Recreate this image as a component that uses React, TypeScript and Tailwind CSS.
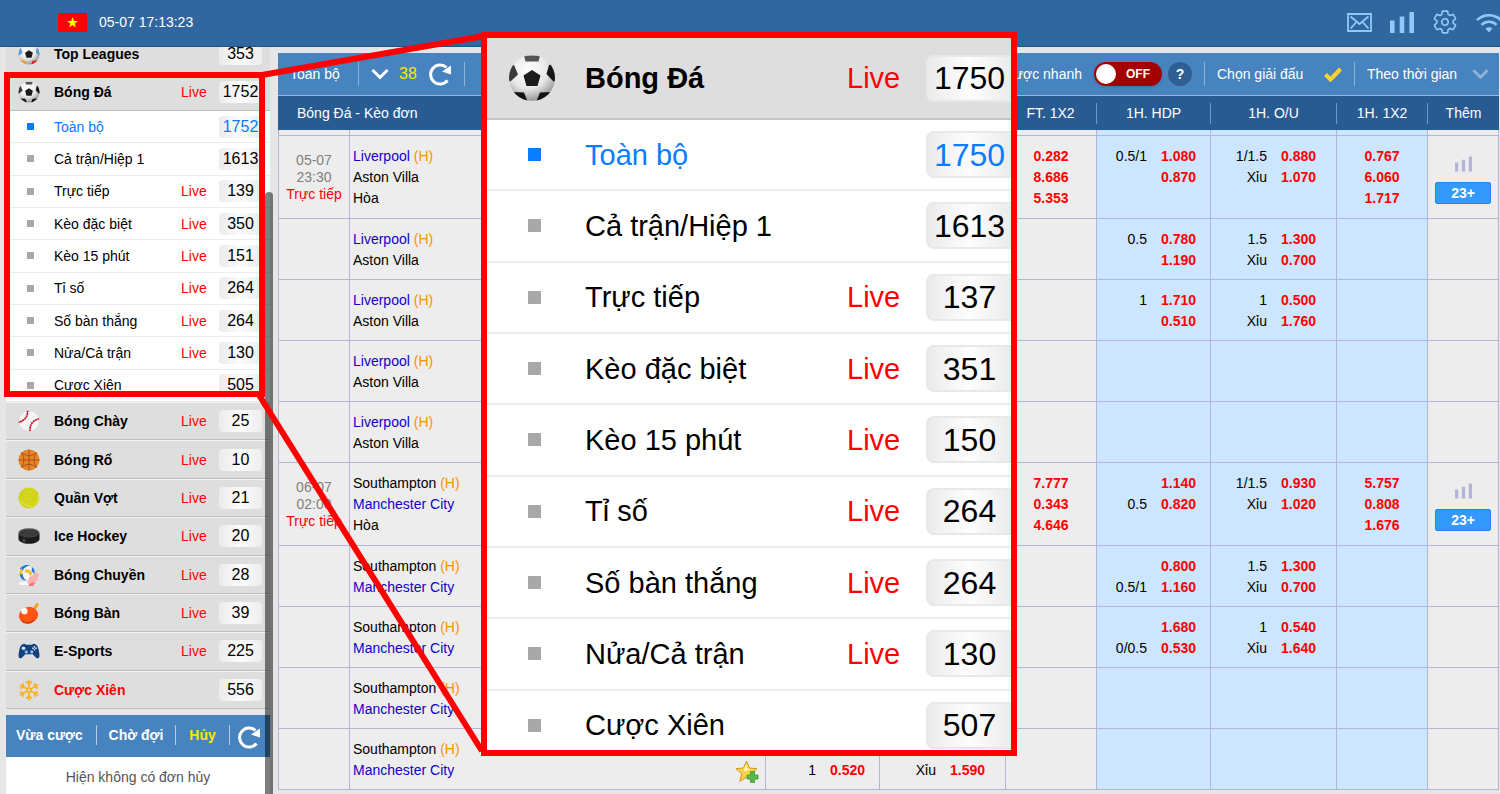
import { useState, type ReactNode } from 'react';
import { IoSettingsOutline } from 'react-icons/io5';

type Sport = {
  name: string;
  count: number;
  live: boolean;
  icon: ReactNode;
  highlight?: boolean;
};

type Market = { name: string; live: boolean; count: number; zoomCount: number };

type Line = [handicap: string, odds: string];

type OddsRow = {
  id: number;
  kickoff?: [date: string, time: string];
  home: string;
  away: string;
  favourite: 'home' | 'away';
  draw?: boolean;
  ftHdp?: Line[];
  ftOu?: Line[];
  ft1x2?: string[];
  hdp?: Line[];
  ou?: Line[];
  h1x2?: string[];
};

const MARKETS: Market[] = [
  { name: 'Toàn bộ', live: false, count: 1752, zoomCount: 1750 },
  { name: 'Cả trận/Hiệp 1', live: false, count: 1613, zoomCount: 1613 },
  { name: 'Trực tiếp', live: true, count: 139, zoomCount: 137 },
  { name: 'Kèo đặc biệt', live: true, count: 350, zoomCount: 351 },
  { name: 'Kèo 15 phút', live: true, count: 151, zoomCount: 150 },
  { name: 'Tỉ số', live: true, count: 264, zoomCount: 264 },
  { name: 'Số bàn thắng', live: true, count: 264, zoomCount: 264 },
  { name: 'Nửa/Cả trận', live: true, count: 130, zoomCount: 130 },
  { name: 'Cược Xiên', live: false, count: 505, zoomCount: 507 },
];

const LIV = { home: 'Liverpool', away: 'Aston Villa', favourite: 'home' as const };
const SOU = { home: 'Southampton', away: 'Manchester City', favourite: 'away' as const };

const ROWS: OddsRow[] = [
  {
    id: 1,
    ...LIV,
    kickoff: ['05-07', '23:30'],
    draw: true,
    ft1x2: ['0.282', '8.686', '5.353'],
    hdp: [['0.5/1', '1.080'], ['', '0.870']],
    ou: [['1/1.5', '0.880'], ['Xỉu', '1.070']],
    h1x2: ['0.767', '6.060', '1.717'],
  },
  { id: 2, ...LIV, hdp: [['0.5', '0.780'], ['', '1.190']], ou: [['1.5', '1.300'], ['Xỉu', '0.700']] },
  { id: 3, ...LIV, hdp: [['1', '1.710'], ['', '0.510']], ou: [['1', '0.500'], ['Xỉu', '1.760']] },
  { id: 4, ...LIV },
  { id: 5, ...LIV },
  {
    id: 6,
    ...SOU,
    kickoff: ['06-07', '02:00'],
    draw: true,
    ft1x2: ['7.777', '0.343', '4.646'],
    hdp: [['', '1.140'], ['0.5', '0.820']],
    ou: [['1/1.5', '0.930'], ['Xỉu', '1.020']],
    h1x2: ['5.757', '0.808', '1.676'],
  },
  { id: 7, ...SOU, hdp: [['', '0.800'], ['0.5/1', '1.160']], ou: [['1.5', '1.300'], ['Xỉu', '0.700']] },
  { id: 8, ...SOU, hdp: [['', '1.680'], ['0/0.5', '0.530']], ou: [['1', '0.540'], ['Xỉu', '1.640']] },
  { id: 9, ...SOU },
  { id: 10, ...SOU, ftHdp: [['', ''], ['1', '0.520']], ftOu: [['', ''], ['Xỉu', '1.590']] },
];

function SoccerBall({ id, className, world }: { id: string; className: string; world?: boolean }) {
  return (
    <svg viewBox="0 0 48 48" className={className} aria-hidden="true">
      <defs>
        <radialGradient id={id} cx="42%" cy="32%" r="68%">
          <stop offset="0" stopColor="#fff" />
          <stop offset="0.6" stopColor="#e8e8e8" />
          <stop offset="1" stopColor="#9a9a9a" />
        </radialGradient>
        <clipPath id={`${id}-clip`}>
          <circle cx="24" cy="24" r="23" />
        </clipPath>
      </defs>
      <circle cx="24" cy="24" r="23" fill={`url(#${id})`} />
      <g clipPath={`url(#${id}-clip)`}>
        <path d="M24 16l8.500 5.500-3 10.500h-11l-3-10.500z" fill="#1c1c1c" />
        <path d="M16 1.500h16l-1.500 6H17.500z" fill={world ? '#e9eef5' : '#555'} />
        <path d="M0 12l6-1 4 9.500L3 27l-4 1z" fill={world ? '#5b9bd5' : '#3a3a3a'} />
        <path d="M48 10l-7 1-2.500 9L45 27l5 1z" fill={world ? '#5b9bd5' : '#161616'} />
        <path d="M4 38l12 .5 4 10H8z" fill={world ? '#f59a23' : '#111'} />
        <path d="M44 38l-12 .5-4 10H40z" fill={world ? '#e02020' : '#111'} />
      </g>
    </svg>
  );
}

function BaseballIcon() {
  return (
    <svg viewBox="0 0 24 24" className="size-[22px]" aria-hidden="true">
      <circle cx="12" cy="12" r="11.500" fill="#f4f4f4" stroke="#ccc" strokeWidth="0.600" />
      <path d="M10.500 1Q11 10 1 13.500M22.500 9.500Q12.500 12.500 13 23" fill="none" stroke="#c8202c" strokeWidth="1.300" />
      <path d="M10.500 1Q11 10 1 13.500M22.500 9.500Q12.500 12.500 13 23" fill="none" stroke="#c8202c" strokeWidth="2.400" strokeDasharray="0.800 2" />
    </svg>
  );
}

function BasketballIcon() {
  return (
    <svg viewBox="0 0 24 24" className="size-[22px]" aria-hidden="true">
      <circle cx="12" cy="12" r="11.500" fill="#e8832a" />
      <path
        d="M12 .5v23M.5 12h23M4 4q4.500 3.500 8 3.500T20 4M4 20q4.500-3.500 8-3.500t8 3.500M4 4q5 8 0 16M20 4q-5 8 0 16"
        fill="none"
        stroke="#9c4a12"
        strokeWidth="0.900"
      />
    </svg>
  );
}

function TennisIcon() {
  return (
    <svg viewBox="0 0 24 24" className="size-[22px]" aria-hidden="true">
      <circle cx="12" cy="12" r="11.500" fill="#d3d318" />
      <path d="M1.500 15Q11 21.500 16 22.500M22.500 8q1.500 9-6 14.500" fill="none" stroke="#e6e67a" strokeWidth="1" />
      <path d="M8 6h9M7 9h11M8 12h9" stroke="#e4e35c" strokeWidth="1" strokeDasharray="1 2" />
    </svg>
  );
}

function PuckIcon() {
  return (
    <svg viewBox="0 0 24 24" className="size-[22px]" aria-hidden="true">
      <path d="M.5 9v6c0 3 5 5.500 11.500 5.500S23.500 18 23.500 15V9z" fill="#1b1b1b" />
      <ellipse cx="12" cy="8.500" rx="11.500" ry="5" fill="#555" />
      <ellipse cx="12" cy="9" rx="10.500" ry="4" fill="#3b3b3b" />
      <path d="M5 15h3v4H5z" fill="#444" />
    </svg>
  );
}

function VolleyballIcon() {
  return (
    <svg viewBox="0 0 24 24" className="size-[22px]" aria-hidden="true">
      <circle cx="9" cy="9.500" r="8.500" fill="#f5f5f5" />
      <path d="M2 5q5-6 12-3-7 0-9 6zM1 10q2 8 8 8-4-3-4-8z" fill="#1f78d1" />
      <path d="M8 6q6-1 8 5l-3 2q0-4-6-4zM2 6l3-1q-1 4 0 6L1 12z" fill="#f2c230" />
      <path d="M15 3q4 3 3 8l-3-3z" fill="#1f78d1" />
      <path d="M10 22l2-7 2-3 1 2 2-4 1.500.5 1.500-2 1 2 2 .5-2 7-5 5z" fill="#f6b3ae" />
      <path d="M1 20l8-1 3 4H2z" fill="#fafafa" />
      <path d="M12 22l4-2 3 1-3 3h-4z" fill="#ff6f7d" />
    </svg>
  );
}

function PingPongIcon() {
  return (
    <svg viewBox="0 0 24 24" className="size-[22px]" aria-hidden="true">
      <path d="M16 7l4-6 3 1-2 4-4 4z" fill="#f4a020" />
      <ellipse cx="11.500" cy="14.500" rx="10.500" ry="9" fill="#ff5412" transform="rotate(-18 11.500 14.500)" />
      <path d="M3 20q7 5 15-1-2 4.500-8 4.500-5 0-7-3.500z" fill="#cc3305" />
      <circle cx="7" cy="10" r="3.400" fill="#fff" />
    </svg>
  );
}

function GamepadIcon() {
  return (
    <svg viewBox="0 0 24 24" className="size-[22px]" aria-hidden="true">
      <path
        d="M5 4.500q2-1 4 .8h6q2-1.800 4-.8 2.500 1 3.500 6 1.500 7 .5 8.500-1.500 2-3.500 0L16 15.500H8L4.500 19Q2.500 21 1 19q-1-1.500.5-8.500 1-5 3.500-6z"
        fill="#14407c"
      />
      <circle cx="6" cy="9" r="2" fill="#cfe4ff" />
      <circle cx="9" cy="13" r="1.700" fill="#8fc0ff" />
      <circle cx="15" cy="13" r="1.700" fill="#8fc0ff" />
      <path d="M18 6.500v5M15.500 9h5" stroke="#e6f1ff" strokeWidth="1.400" strokeDasharray="1.700 1.600" />
    </svg>
  );
}

function SnowflakeIcon() {
  return (
    <svg viewBox="0 0 24 24" className="size-[22px]" fill="none" stroke="#fbb01c" strokeWidth="1.800" aria-hidden="true">
      {[0, 60, 120, 180, 240, 300].map((deg) => (
        <path key={deg} d="M12 9.500V.5M8.800 2.500l3.200 3 3.200-3M12 9.500l-2.200 1.200" transform={`rotate(${deg} 12 12)`} />
      ))}
    </svg>
  );
}

function BarsIcon({ className }: { className: string }) {
  return (
    <svg viewBox="0 0 24 21" className={className} fill="currentColor" aria-hidden="true">
      <path d="M0 8.500h4.600V21H0zM9.700 4.500h4.600V21H9.700zM19.400 0H24v21h-4.600z" />
    </svg>
  );
}

function MailIcon() {
  return (
    <svg viewBox="0 0 25 19" className="h-[19px] w-[25px]" fill="none" stroke="currentColor" strokeWidth="1.800" aria-hidden="true">
      <path d="M1 1h23v17H1zM3.500 3.500L12.500 11l9-7.500M3.500 15.500l6-6.500M21.500 15.500l-6-6.500" />
    </svg>
  );
}

function WifiIcon() {
  return (
    <svg viewBox="0 0 26 21" className="h-[21px] w-[26px] shrink-0" fill="none" stroke="currentColor" strokeWidth="2.600" aria-hidden="true">
      <path d="M1 8.200a17 17 0 0 1 24 0M5.500 12.900a10.600 10.600 0 0 1 15 0" />
      <path d="M9.500 16.600a5 5 0 0 1 7 0L13 20.500z" fill="currentColor" stroke="none" />
    </svg>
  );
}

function RefreshIcon() {
  return (
    <svg viewBox="0 0 24 24" className="size-6" aria-hidden="true">
      <path d="M19.500 18.500A9.500 9.500 0 1 1 18.500 5.500" fill="none" stroke="#fff" strokeWidth="3" />
      <path d="M23 3.500v9l-9-3z" fill="#fff" />
    </svg>
  );
}

function ChevronIcon({ className }: { className: string }) {
  return (
    <svg viewBox="0 0 18 12" className={className} fill="none" stroke="currentColor" strokeWidth="3" aria-hidden="true">
      <path d="M1.500 2L9 9.500 16.500 2" />
    </svg>
  );
}

function StarAddIcon() {
  return (
    <svg viewBox="0 0 24 24" className="size-6" aria-hidden="true">
      <path d="M11.500 1l3 7 7.500.7-5.700 5 1.800 7.600-6.600-4-6.700 4 1.900-7.600L1 8.700 8.500 8z" fill="#f9d24a" stroke="#c99b22" strokeWidth="1" />
      <path d="M11 4l1.500 5 4 .5-8 2z" fill="#fff3b8" />
      <path d="M15.500 11.500h4v3.500H23v4h-3.500v3.500h-4V19H12v-4h3.500z" fill="#57b94c" stroke="#3d9a38" strokeWidth="0.800" />
    </svg>
  );
}

const SPORTS: Sport[] = [
  { name: 'Bóng Chày', live: true, count: 25, icon: <BaseballIcon /> },
  { name: 'Bóng Rổ', live: true, count: 10, icon: <BasketballIcon /> },
  { name: 'Quần Vợt', live: true, count: 21, icon: <TennisIcon /> },
  { name: 'Ice Hockey', live: true, count: 20, icon: <PuckIcon /> },
  { name: 'Bóng Chuyền', live: true, count: 28, icon: <VolleyballIcon /> },
  { name: 'Bóng Bàn', live: true, count: 39, icon: <PingPongIcon /> },
  { name: 'E-Sports', live: true, count: 225, icon: <GamepadIcon /> },
  { name: 'Cược Xiên', live: false, count: 556, icon: <SnowflakeIcon />, highlight: true },
];

function Count({ value }: { value: number }) {
  return (
    <span className="flex h-[22px] w-[43px] items-center justify-center rounded bg-linear-to-r from-[#ebebeb] via-[#fbfbfb] to-[#ededed] text-base leading-5">
      {value}
    </span>
  );
}

function SportRow({ sport }: { sport: Sport }) {
  return (
    <button
      type="button"
      className="grid h-full w-full grid-cols-[48px_1fr_38px_51px] items-center border-t border-b border-t-[#f2f2f2] border-b-[#bdbdbd] bg-[#dedede] text-left"
    >
      <span className="pl-3">{sport.icon}</span>
      <span className={`font-bold ${sport.highlight ? 'text-[#ff0000]' : ''}`}>{sport.name}</span>
      <span className="text-[#ff0000]">{sport.live ? 'Live' : ''}</span>
      <Count value={sport.count} />
    </button>
  );
}

function MarketRow({ market, active, onSelect }: { market: Market; active: boolean; onSelect: () => void }) {
  return (
    <button
      type="button"
      onClick={onSelect}
      className={`grid w-full grid-cols-[48px_1fr_38px_51px] items-center border-b border-[#ececec] bg-white text-left ${
        active ? 'text-[#0a7cff]' : ''
      }`}
    >
      <span className={`ml-[21px] size-[7px] ${active ? 'bg-[#0a7cff]' : 'bg-[#a8a8a8]'}`} />
      <span>{market.name}</span>
      <span className="text-[#ff0000]">{market.live ? 'Live' : ''}</span>
      <Count value={market.count} />
    </button>
  );
}

function Sidebar() {
  const [active, setActive] = useState('Toàn bộ');
  return (
    <aside className="relative flex w-[273px] shrink-0 flex-col overflow-hidden pr-[3px] pl-1.5">
      <nav className="-mt-3 shrink-0">
        <div className="h-[38px]">
          <SportRow
            sport={{ name: 'Top Leagues', live: false, count: 353, icon: <SoccerBall id="ball-top" className="size-[22px]" world /> }}
          />
        </div>
        <div className="h-[38px]">
          <SportRow sport={{ name: 'Bóng Đá', live: true, count: 1752, icon: <SoccerBall id="ball-side" className="size-[22px]" /> }} />
        </div>
        <div className="grid h-[291px] auto-rows-fr">
          {MARKETS.map((m) => (
            <MarketRow key={m.name} market={m} active={m.name === active} onSelect={() => setActive(m.name)} />
          ))}
        </div>
        <div className="grid h-[307px] auto-rows-fr">
          {SPORTS.map((s) => (
            <SportRow key={s.name} sport={s} />
          ))}
        </div>
      </nav>
      <div className="mt-1.5 flex h-[42px] shrink-0 items-center bg-[#4783bf] pb-0.5 pl-2.5 font-bold text-white">
        <button type="button" className="w-20 text-left">Vừa cược</button>
        <span className="h-5 w-px bg-[#b5cde4]" />
        <button type="button" className="w-[78px]">Chờ đợi</button>
        <span className="h-5 w-px bg-[#b5cde4]" />
        <button type="button" className="w-[53px] text-[#ffe600]">Hủy</button>
        <span className="h-5 w-px bg-[#b5cde4]" />
        <button type="button" aria-label="Làm mới đơn cược" className="ml-[7px] pt-1">
          <RefreshIcon />
        </button>
      </div>
      <p className="flex-1 bg-white pt-2.5 text-center leading-5 text-[#555]">Hiện không có đơn hủy</p>
      {/* scroll thumb lies over the list */}
      <div className="absolute right-0 -bottom-2 h-[610px] w-2 rounded-full bg-black/50" />
    </aside>
  );
}

function Toolbar() {
  const [quickBet, setQuickBet] = useState(false);
  return (
    <div className="flex h-[43px] items-center border-b border-[#9db4dc] bg-[#4783bf] pr-2.5 pl-3 text-white">
      <button type="button" className="w-[68px] text-left">Toàn bộ</button>
      <span className="h-6 w-px bg-[#8db4da]" />
      <ChevronIcon className="ml-3 h-3 w-[18px]" />
      <span className="ml-2.5 text-base text-[#ffe600]">38</span>
      <button type="button" aria-label="Làm mới" className="mr-3 ml-[11px]">
        <RefreshIcon />
      </button>
      <span className="h-6 w-px bg-[#8db4da]" />
      <label htmlFor="quick-bet" className="mr-3 ml-auto">Cược nhanh</label>
      <span className="flex h-6 w-[68px] items-center gap-[10px] rounded-full bg-[#a50000] px-0.5 text-xs font-bold shadow">
        <input
          id="quick-bet"
          type="checkbox"
          checked={quickBet}
          onChange={(e) => setQuickBet(e.target.checked)}
          className={`size-5 appearance-none rounded-full bg-white ${quickBet ? 'order-2' : ''}`}
        />
        {quickBet ? 'ON' : 'OFF'}
      </span>
      <button type="button" className="mr-3 ml-1.5 size-6 rounded-full bg-[#2f5f92] text-sm font-bold">?</button>
      <span className="h-6 w-px bg-[#8db4da]" />
      <button type="button" className="mx-3 flex items-center">
        <span className="w-[107px] text-left">Chọn giải đấu</span>
        <svg viewBox="0 0 18 15" className="h-[15px] w-[18px]" fill="none" stroke="#ffd32a" strokeWidth="4" aria-hidden="true">
          <path d="M1.500 7.500l5 5L16.500 2" />
        </svg>
      </button>
      <span className="mr-3 h-6 w-px bg-[#8db4da]" />
      <select aria-label="Sắp xếp" className="w-[105px] appearance-none bg-transparent outline-none">
        <option>Theo thời gian</option>
      </select>
      <ChevronIcon className="h-3 w-[17px] text-[#8db4da]" />
    </div>
  );
}

function LinesCell({ lines = [], className }: { lines?: Line[]; className: string }) {
  return (
    <td className={`border-b border-l border-[#b4b4d6] pt-2.5 align-top ${className}`}>
      {lines.map(([handicap, odds], i) => (
        <div key={i} className="flex min-h-[21px] justify-end">
          <span>{handicap}</span>
          <span className="w-[49px] text-right font-bold text-[#ff0000]">{odds}</span>
        </div>
      ))}
    </td>
  );
}

function OddsCell({ odds = [], className }: { odds?: string[]; className?: string }) {
  return (
    <td className={`border-b border-l border-[#b4b4d6] pt-2.5 text-center align-top font-bold text-[#ff0000] ${className ?? ''}`}>
      {odds.map((o) => (
        <div key={o}>{o}</div>
      ))}
    </td>
  );
}

function MatchRow({ row }: { row: OddsRow }) {
  return (
    <tr className={row.draw ? 'h-[83px]' : 'h-[61px]'}>
      <td className="border-b border-l border-[#b4b4d6] text-center leading-[17px] text-[#808080]">
        {row.kickoff && (
          <>
            {row.kickoff[0]}
            <br />
            {row.kickoff[1]}
            <br />
            <span className="text-[#ff0000]">Trực tiếp</span>
          </>
        )}
      </td>
      <td className="border-b border-l border-[#b4b4d6] pt-2.5 pl-[3px] align-top">
        <div className="flex justify-between pr-1.5">
          <div>
            <div className={row.favourite === 'home' ? 'text-[#1400c8]' : ''}>
              {row.home} <span className="text-[#ff9000]">(H)</span>
            </div>
            <div className={row.favourite === 'away' ? 'text-[#1400c8]' : ''}>{row.away}</div>
            {row.draw && <div>Hòa</div>}
          </div>
          <button type="button" aria-label="Thêm yêu thích" className="mt-[21px] size-6">
            <StarAddIcon />
          </button>
        </div>
      </td>
      <LinesCell lines={row.ftHdp} className="pr-[14px]" />
      <LinesCell lines={row.ftOu} className="pr-5" />
      <OddsCell odds={row.ft1x2} />
      <LinesCell lines={row.hdp} className="bg-[#cce6ff] pr-[14px]" />
      <LinesCell lines={row.ou} className="bg-[#cce6ff] pr-5" />
      <OddsCell odds={row.h1x2} className="bg-[#cce6ff]" />
      <td className="border-x border-b border-[#b4b4d6] px-[7px]">
        {row.kickoff && (
          <div className="flex flex-col items-center gap-2.5 pt-1.5">
            <BarsIcon className="h-4 w-[17px] text-[#b4b4d6]" />
            <button type="button" className="h-[22px] w-full rounded-xs border border-[#1d88f2] bg-[#3399ff] leading-5 font-bold text-white">
              23+
            </button>
          </div>
        )}
      </td>
    </tr>
  );
}

const HEADS = ['', '', 'FT. 1X2', '1H. HDP', '1H. O/U', '1H. 1X2', 'Thêm'];

function OddsTable() {
  return (
    <table className="w-full table-fixed border-separate border-spacing-0 bg-[#ededed] leading-[21px]">
      <colgroup>
        <col className="w-[71px]" />
        <col />
        <col className="w-[114px]" />
        <col className="w-[126px]" />
        <col className="w-[91px]" />
        <col className="w-[114px]" />
        <col className="w-[126px]" />
        <col className="w-[91px]" />
        <col className="w-[72px]" />
      </colgroup>
      <thead>
        <tr className="h-[34px] bg-[#295b93] text-white">
          <th colSpan={2} className="pl-[19px] text-left font-normal">Bóng Đá - Kèo đơn</th>
          {HEADS.map((h, i) => (
            <th key={i} className="p-0 font-normal">
              <div className={`h-[21px] ${i > 2 ? 'border-l border-[#5f9bd6]' : ''}`}>{h}</div>
            </th>
          ))}
        </tr>
      </thead>
      <tbody>
        <tr className="h-1.5">
          {[0, 1, 2, 3, 4, 5, 6, 7, 8].map((c) => (
            <td
              key={c}
              className={`border-b border-l border-[#b4b4d6] p-0 ${c > 4 && c < 8 ? 'bg-[#cce6ff]' : ''} ${c === 8 ? 'border-r' : ''}`}
            />
          ))}
        </tr>
        {ROWS.map((row) => (
          <MatchRow key={row.id} row={row} />
        ))}
      </tbody>
    </table>
  );
}

function ZoomPanel() {
  return (
    <section
      aria-label="Bóng Đá"
      className="absolute top-8 left-[481px] h-[724px] w-[536px] overflow-hidden border-6 border-[#ff0000] bg-white text-[29px] leading-9"
    >
      <div className="grid h-[82px] grid-cols-[98px_1fr_79px_85px] items-center border-b-2 border-[#c4c4c4] bg-[#dedede]">
        <span className="pl-[21px]">
          <SoccerBall id="ball-zoom" className="size-12" />
        </span>
        <span className="font-bold">Bóng Đá</span>
        <span className="text-[#ff0000]">Live</span>
        <ZoomCount value={1750} />
      </div>
      <div className="grid h-[642px] auto-rows-fr">
        {MARKETS.map((m, i) => (
          <div
            key={m.name}
            className={`grid grid-cols-[98px_1fr_79px_85px] items-center border-b-2 border-[#ececec] ${i === 0 ? 'text-[#0a7cff]' : ''}`}
          >
            <span className={`ml-[41px] size-[13px] ${i === 0 ? 'bg-[#0a7cff]' : 'bg-[#a8a8a8]'}`} />
            <span>{m.name}</span>
            <span className="text-[#ff0000]">{m.live ? 'Live' : ''}</span>
            <ZoomCount value={m.zoomCount} />
          </div>
        ))}
      </div>
    </section>
  );
}

function ZoomCount({ value }: { value: number }) {
  return (
    <span className="flex h-[47px] items-center justify-center rounded-l-lg border-2 border-r-0 border-[#e8e8e8] bg-linear-to-r from-[#ebebeb] via-[#fdfdfd] to-[#ebebeb] text-[32px]">
      {value}
    </span>
  );
}

export default function App() {
  return (
    <div className="relative flex h-screen flex-col overflow-hidden bg-[#e6e6e6] font-['Liberation_Sans',Arial,sans-serif] text-sm text-black">
      <header className="flex h-[47px] shrink-0 items-center justify-between border-b border-[#1f5488] bg-[#31679f] pb-0.5 pl-[58px] text-[#93c8ff]">
        <div className="flex items-center gap-3 text-white">
          <svg viewBox="0 0 29 19" className="h-[19px] w-[29px]" role="img" aria-label="Tiếng Việt">
            <path d="M0 0h29v19H0z" fill="#f00" />
            <path d="M14.500 4l1.400 4h4.100l-3.300 2.500 1.200 4-3.400-2.400-3.400 2.400 1.200-4L9 8h4.100z" fill="#ff0" />
          </svg>
          <time>05-07 17:13:23</time>
        </div>
        <div className="flex items-center gap-[18px] overflow-hidden">
          <button type="button" aria-label="Tin nhắn"><MailIcon /></button>
          <button type="button" aria-label="Thống kê"><BarsIcon className="h-[21px] w-6" /></button>
          <button type="button" aria-label="Cài đặt"><IoSettingsOutline className="size-[26px]" /></button>
          <button type="button" aria-label="Kết nối" className="-mr-0.5"><WifiIcon /></button>
        </div>
      </header>
      <div className="flex min-h-0 flex-1">
        <Sidebar />
        <main className="min-w-0 flex-1 pt-1.5 pr-px pl-[5px]">
          <Toolbar />
          <OddsTable />
        </main>
      </div>

      {/* callout drawn over the page: frame, leader lines, enlarged menu */}
      <div className="pointer-events-none absolute top-[72px] left-1 h-[325px] w-[261px] border-6 border-[#ff0000]" />
      <svg viewBox="0 0 490 794" className="pointer-events-none absolute top-0 left-0 h-[794px] w-[490px]" aria-hidden="true">
        <path d="M262 75L484 36M259 395L482 751" stroke="#f00" strokeWidth="6" />
      </svg>
      <ZoomPanel />
    </div>
  );
}
